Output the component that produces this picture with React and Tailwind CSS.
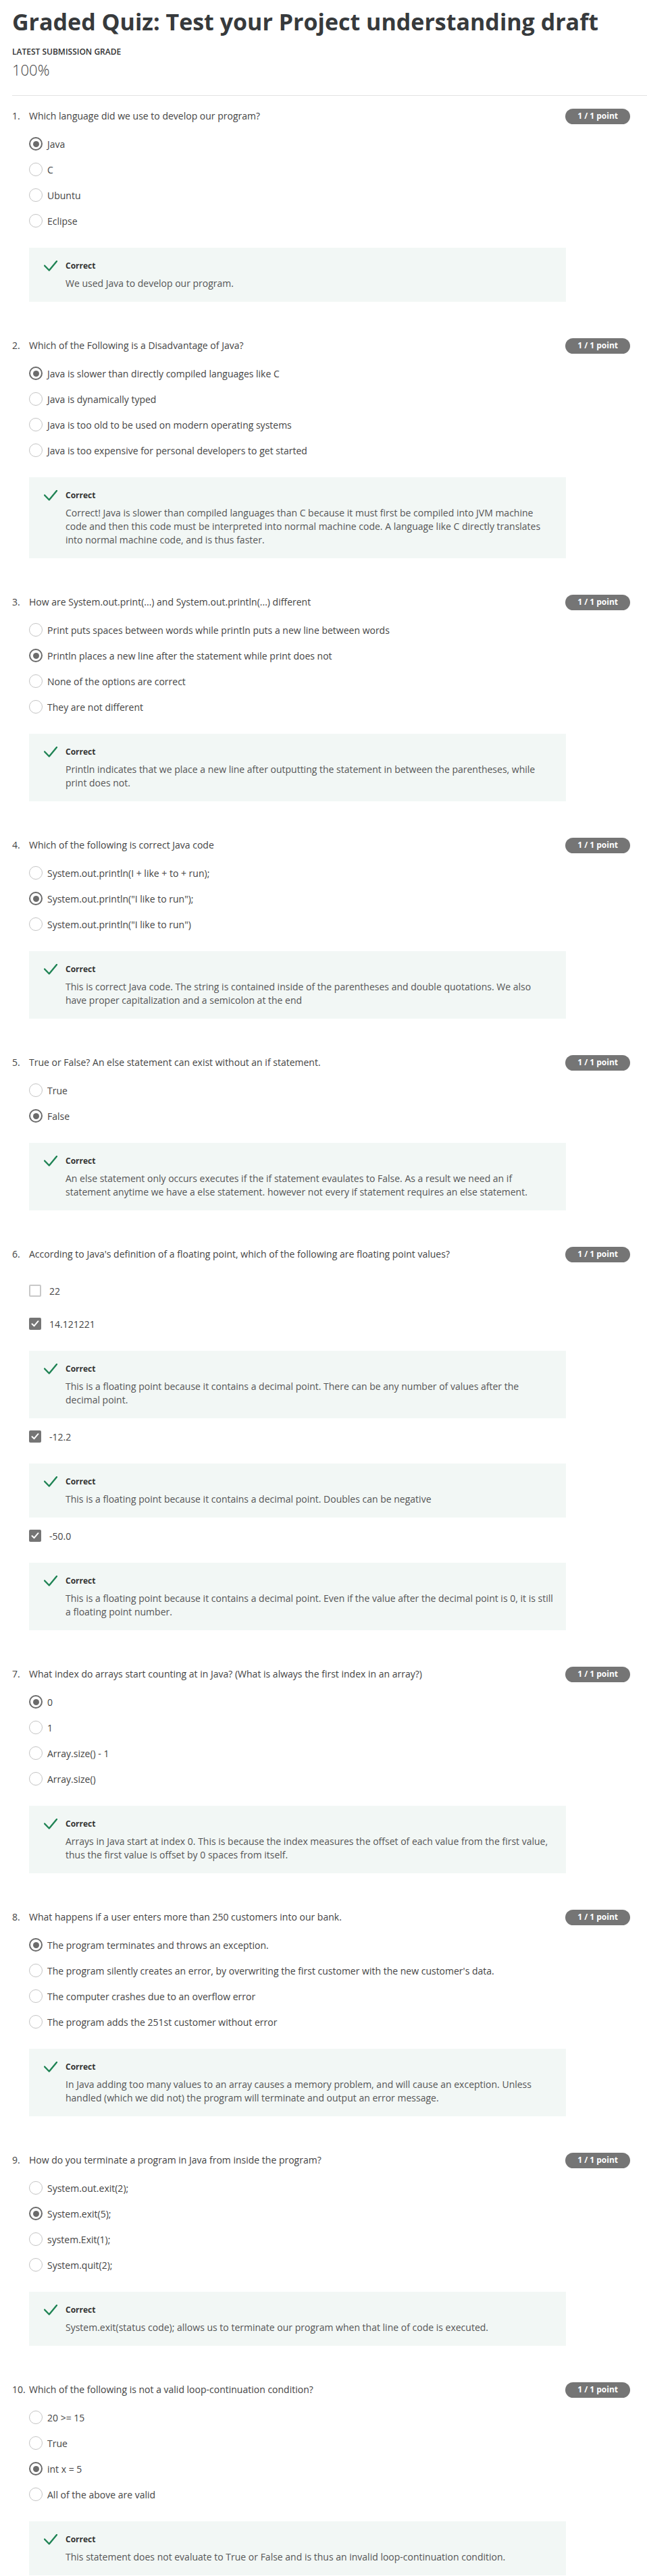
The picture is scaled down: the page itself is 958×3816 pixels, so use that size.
import React from 'react'

const questions = [
  {
    text: 'Which language did we use to develop our program?',
    type: 'radio',
    options: ['Java', 'C', 'Ubuntu', 'Eclipse'],
    selected: 0,
    feedback: 'We used Java to develop our program.',
  },
  {
    text: 'Which of the Following is a Disadvantage of Java?',
    type: 'radio',
    options: [
      'Java is slower than directly compiled languages like C',
      'Java is dynamically typed',
      'Java is too old to be used on modern operating systems',
      'Java is too expensive for personal developers to get started',
    ],
    selected: 0,
    feedback:
      'Correct! Java is slower than compiled languages than C because it must first be compiled into JVM machine code and then this code must be interpreted into normal machine code. A language like C directly translates into normal machine code, and is thus faster.',
  },
  {
    text: 'How are System.out.print(...) and System.out.println(...) different',
    type: 'radio',
    options: [
      'Print puts spaces between words while println puts a new line between words',
      'Println places a new line after the statement while print does not',
      'None of the options are correct',
      'They are not different',
    ],
    selected: 1,
    feedback:
      'Println indicates that we place a new line after outputting the statement in between the parentheses, while print does not.',
  },
  {
    text: 'Which of the following is correct Java code',
    type: 'radio',
    options: [
      'System.out.println(I + like + to + run);',
      'System.out.println("I like to run");',
      'System.out.println("I like to run")',
    ],
    selected: 1,
    feedback:
      'This is correct Java code. The string is contained inside of the parentheses and double quotations. We also have proper capitalization and a semicolon at the end',
  },
  {
    text: 'True or False? An else statement can exist without an if statement.',
    type: 'radio',
    options: ['True', 'False'],
    selected: 1,
    feedback:
      'An else statement only occurs executes if the if statement evaulates to False. As a result we need an if statement anytime we have a else statement. however not every if statement requires an else statement.',
  },
  {
    text: "According to Java's definition of a floating point, which of the following are floating point values?",
    type: 'checkbox',
    options: [
      { label: '22', checked: false },
      {
        label: '14.121221',
        checked: true,
        feedback:
          'This is a floating point because it contains a decimal point. There can be any number of values after the decimal point.',
      },
      {
        label: '-12.2',
        checked: true,
        feedback: 'This is a floating point because it contains a decimal point. Doubles can be negative',
      },
      {
        label: '-50.0',
        checked: true,
        feedback:
          'This is a floating point because it contains a decimal point. Even if the value after the decimal point is 0, it is still a floating point number.',
      },
    ],
  },
  {
    text: 'What index do arrays start counting at in Java? (What is always the first index in an array?)',
    type: 'radio',
    options: ['0', '1', 'Array.size() - 1', 'Array.size()'],
    selected: 0,
    feedback:
      'Arrays in Java start at index 0. This is because the index measures the offset of each value from the first value, thus the first value is offset by 0 spaces from itself.',
  },
  {
    text: 'What happens if a user enters more than 250 customers into our bank.',
    type: 'radio',
    options: [
      'The program terminates and throws an exception.',
      "The program silently creates an error, by overwriting the first customer with the new customer's data.",
      'The computer crashes due to an overflow error',
      'The program adds the 251st customer without error',
    ],
    selected: 0,
    feedback:
      'In Java adding too many values to an array causes a memory problem, and will cause an exception. Unless handled (which we did not) the program will terminate and output an error message.',
  },
  {
    text: 'How do you terminate a program in Java from inside the program?',
    type: 'radio',
    options: ['System.out.exit(2);', 'System.exit(5);', 'system.Exit(1);', 'System.quit(2);'],
    selected: 1,
    feedback: 'System.exit(status code); allows us to terminate our program when that line of code is executed.',
  },
  {
    text: 'Which of the following is not a valid loop-continuation condition?',
    type: 'radio',
    options: ['20 >= 15', 'True', 'int x = 5', 'All of the above are valid'],
    selected: 2,
    feedback: 'This statement does not evaluate to True or False and is thus an invalid loop-continuation condition.',
  },
]

function Radio({ checked }) {
  if (checked) {
    return (
      <span className="flex h-5 w-5 shrink-0 items-center justify-center rounded-full border-[2.5px] border-[#6b6b6b]">
        <span className="h-[9px] w-[9px] rounded-full bg-[#6b6b6b]" />
      </span>
    )
  }
  return <span className="h-5 w-5 shrink-0 rounded-full border-[1.5px] border-[#c4c4c4]" />
}

function Checkbox({ checked }) {
  if (checked) {
    return (
      <span className="flex h-[18px] w-[18px] shrink-0 items-center justify-center rounded-[2px] bg-[#757575]">
        <svg width="12" height="10" viewBox="0 0 12 10" fill="none">
          <path d="M1.5 5.2 4.6 8.2 10.5 1.2" stroke="white" strokeWidth="2" strokeLinecap="round" strokeLinejoin="round" />
        </svg>
      </span>
    )
  }
  return <span className="h-[18px] w-[18px] shrink-0 rounded-[2px] border-2 border-[#c8c8c8]" />
}

function Feedback({ text }) {
  return (
    <div className="mt-[21px] flex bg-[#f2f7f5] py-[17px] pl-[22px] pr-[18px]">
      <svg className="mt-[2px] shrink-0" width="20" height="16" viewBox="0 0 20 16" fill="none">
        <path d="M1 7.5 7.8 14.5 19 1" stroke="#1f8354" strokeWidth="2.4" strokeLinecap="round" strokeLinejoin="round" />
      </svg>
      <div className="ml-3 flex-1">
        <div className="text-[12px] font-bold leading-5 text-[#333]">Correct</div>
        <p className="mt-[6px] text-[14px] leading-5 text-[#555]">{text}</p>
      </div>
    </div>
  )
}

function Question({ q, index }) {
  return (
    <div>
      <div className="flex h-6 items-center text-[14px] leading-6 text-[#444]">
        <span className="w-[25px] shrink-0">{index + 1}.</span>
        <span className="flex-1">{q.text}</span>
        <span className="flex h-[23px] shrink-0 items-center rounded-full bg-[#757575] px-[18px] text-[12px] font-bold text-white">
          1 / 1 point
        </span>
      </div>
      <div className="pl-[25px] pr-[95px]">
        {q.type === 'radio' ? (
          <>
            <div className="mt-[10px]">
              {q.options.map((opt, i) => (
                <div key={i} className="flex h-[38px] items-center gap-[7px] text-[14px] text-[#444]">
                  <Radio checked={i === q.selected} />
                  <span>{opt}</span>
                </div>
              ))}
            </div>
            <Feedback text={q.feedback} />
          </>
        ) : (
          <div className="mt-[12px]">
            {q.options.map((opt, i) => {
              const prevHadFeedback = i > 0 && q.options[i - 1].feedback
              return (
                <div key={i} className={prevHadFeedback ? 'pt-[8px]' : 'pt-[11px]'}>
                  <div className="flex h-[38px] items-center gap-3 text-[14px] text-[#444]">
                    <Checkbox checked={opt.checked} />
                    <span>{opt.label}</span>
                  </div>
                  {opt.feedback && <Feedback text={opt.feedback} />}
                </div>
              )
            })}
          </div>
        )}
      </div>
    </div>
  )
}

export default function App() {
  return (
    <div className="min-h-[3816px] bg-white pb-[7px] pl-[18px] font-['Open_Sans',sans-serif] text-[#444]">
      <div className="pr-[25px]">
        <h1 className="pt-[12px] text-[34px] font-bold leading-[40px] text-[#373a3c]">
          Graded Quiz: Test your Project understanding draft
        </h1>
        <div className="mt-[17px] text-[12px] font-semibold uppercase leading-4 text-[#333]">Latest Submission Grade</div>
        <div className="mt-[4px] text-[22px] font-light leading-[28px] text-[#444]">100%</div>
      </div>
      <div className="mt-[24px] h-px bg-[#e3e3e3]" />
      <div className="mt-[18px] flex flex-col gap-[53px] pr-[25px]">
        {questions.map((q, i) => (
          <Question key={i} q={q} index={i} />
        ))}
      </div>
    </div>
  )
}
